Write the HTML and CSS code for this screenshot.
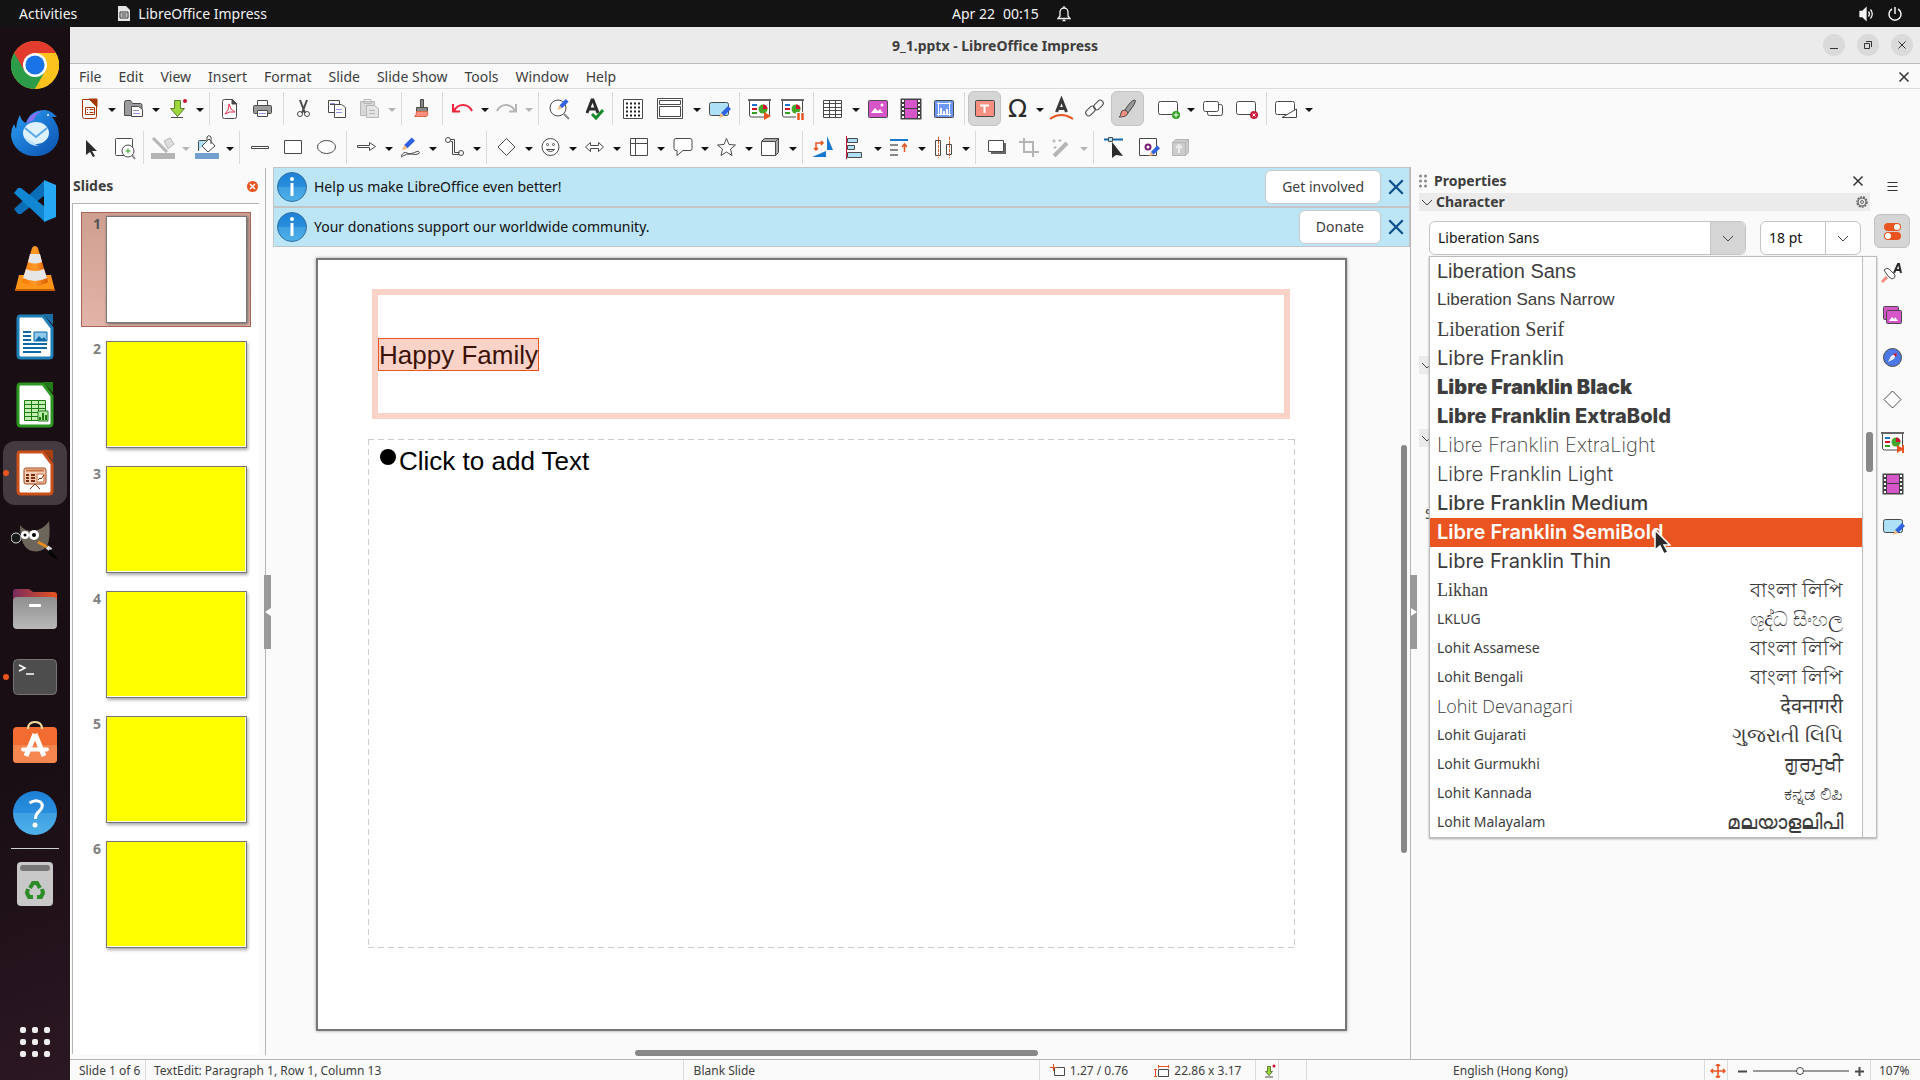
FILE: index.html
```html
<!DOCTYPE html>
<html lang="en">
<head>
<meta charset="utf-8">
<title>9_1.pptx - LibreOffice Impress</title>
<link rel="stylesheet" href="styles.css">
</head>
<body>
<svg class="defs" aria-hidden="true">
  <defs>
    <linearGradient id="g-info" x1="0" y1="0" x2="0" y2="1"><stop offset="0" stop-color="#1c7fd6"/><stop offset=".5" stop-color="#2a8fdd"/><stop offset=".5" stop-color="#3fa0e2"/><stop offset="1" stop-color="#4fb0ea"/></linearGradient>
    <linearGradient id="g-bird" x1="0" y1="0" x2="1" y2="1"><stop offset="0" stop-color="#2aa0f5"/><stop offset="1" stop-color="#0b4fae"/></linearGradient>
    <linearGradient id="g-cone" x1="0" y1="0" x2="1" y2="0"><stop offset="0" stop-color="#f57900"/><stop offset=".5" stop-color="#ff9a2a"/><stop offset="1" stop-color="#d85a00"/></linearGradient>
    <linearGradient id="g-fold" x1="0" y1="0" x2="1" y2="0"><stop offset="0" stop-color="#7a2a5c"/><stop offset="1" stop-color="#e95420"/></linearGradient>
    <linearGradient id="g-grey" x1="0" y1="0" x2="0" y2="1"><stop offset="0" stop-color="#8f8f8f"/><stop offset="1" stop-color="#b8b8b8"/></linearGradient>
    <symbol id="i-pencil" viewBox="0 0 12 12"><path d="M9 0 12 3 5 10 2 7Z" fill="#2f62e0" stroke="none"/><path d="M2 7 5 10 0 12Z" fill="#f7b877" stroke="none"/></symbol>
    <symbol id="i-film" viewBox="0 0 25 25"><rect x="3" y="3" width="20" height="20" fill="#3c3c3c"/><rect x="7" y="4" width="12" height="8" fill="#d655c9" stroke="none"/><rect x="7" y="13" width="12" height="9" fill="#d655c9" stroke="none"/><path d="M5 4v19M21 4v19" stroke="#fff" stroke-width="2" stroke-dasharray="2 2" fill="none"/></symbol>
    <symbol id="i-show" viewBox="0 0 25 25"><path d="M2.500 5v14q0 2 2 2h16q2 0 2-2V5" fill="#fff" stroke="#4a4a4a"/><rect x="1" y="3" width="23" height="2" fill="#666" stroke="none"/><path d="M5 9h5" stroke="#1a73d0" stroke-width="2"/><path d="M5 13h5" stroke="#d01030" stroke-width="2"/><path d="M5 17h5" stroke="#30a020" stroke-width="2"/><circle cx="16" cy="13" r="4.500" fill="#43a82a" stroke="none"/><path d="M16 13V8.500a4.500 4.500 0 0 1 4.500 4.500Z" fill="#d01030" stroke="none"/></symbol>
    <symbol id="i-info" viewBox="0 0 30 30"><circle cx="15" cy="15" r="14.500" fill="url(#g-info)" stroke="#33719c"/><circle cx="15" cy="7" r="2" fill="#fff"/><rect x="13.500" y="11" width="3" height="13" fill="#fff"/></symbol>
    <symbol id="i-x" viewBox="0 0 16 16"><path d="M2 2 14 14M14 2 2 14"/></symbol>
    <symbol id="i-down" viewBox="0 0 12 12"><path d="M1 4 6 9 11 4"/></symbol>
    <symbol id="i-pane" viewBox="0 0 25 25"><rect x="3.500" y="6.500" width="19" height="13" rx="2" fill="#aee0f7" stroke="#4a4a4a"/></symbol>
  </defs>
</svg>

<header class="topbar">
  <button class="top-btn activities">Activities</button>
  <button class="top-btn app-menu">
    <svg width="14" height="16" viewBox="0 0 14 16"><path d="M1 0h8l4 4v11H1z" fill="#e4e4e4"/><path d="M3 6h8v6H3z" fill="#e4e4e4" stroke="#333"/><path d="M4.500 8h5M4.500 10h5" stroke="#333"/></svg>
    LibreOffice Impress
  </button>
  <button class="top-btn clock"><span>Apr 22</span><span>00:15</span>
    <svg width="14" height="16" viewBox="0 0 14 16" fill="none" stroke="#f2f2f2" stroke-width="1.300"><path d="M1 12.500 3 10V6a4 4 0 0 1 8 0v4l2 2.500ZM5.500 14.500h3M7 0v2"/></svg>
  </button>
  <button class="top-btn tray" aria-label="System">
    <svg width="16" height="16" viewBox="0 0 16 16" fill="none" stroke="#f2f2f2" stroke-width="1.300"><path d="M1 5.500h2.500L7 2v12L3.500 10.500H1Z" fill="#f2f2f2"/><path d="M9.500 5.500q2 2.500 0 5M11.500 3.500q3.500 4.500 0 9"/></svg>
    <svg width="16" height="16" viewBox="0 0 16 16" fill="none" stroke="#f2f2f2" stroke-width="1.500"><path d="M5 3a6 6 0 1 0 6 0M8 1v7"/></svg>
  </button>
</header>

<div class="desktop">
<nav class="dock" aria-label="Dock">
  <button class="dock-item" aria-label="Chrome"><svg viewBox="0 0 48 48"><circle cx="24" cy="24" r="24" fill="#fbbc05"/><path d="M24 24 3.200 12A24 24 0 0 1 44.800 12Z" fill="#e33b2e"/><path d="M3.200 12A24 24 0 0 0 24 48L34.400 30 24 24Z" fill="#2c9c48"/><path d="M24 12H44.800A24 24 0 0 1 24 48L34.400 30Z" fill="#fcc31c"/><path d="M3.200 12 13.600 30 24 12Z" fill="#e33b2e"/><circle cx="24" cy="24" r="12" fill="#fff"/><circle cx="24" cy="24" r="9.600" fill="#1a73e8"/></svg></button>
  <button class="dock-item" aria-label="Thunderbird"><svg viewBox="0 0 48 48"><path d="M9 6q1 6 6 8Q19 1 34 1q7 1 12 7l-5 0q7 8 7 18A23 21 0 0 1 24 47 23 22 0 0 1 0 26q0-6 3-11l2 5Q6 11 9 6Z" fill="url(#g-bird)"/><path d="M15 14Q20 3 32 2q-8 3-9 9Z" fill="#8a6ff0"/><ellipse cx="25" cy="24" rx="13" ry="11" fill="#dff1fd"/><path d="M14 19 25 28 36 19" fill="none" stroke="#5aa9ea" stroke-width="2"/><path d="M13 28q4 9 15 9-5-2-6-4Z" fill="#bfe3fb"/><circle cx="37" cy="6" r="1" fill="#fff"/></svg></button>
  <button class="dock-item" aria-label="Visual Studio Code"><svg viewBox="0 0 48 48"><path d="M34 3 3 32l4 5 3 0L34 18Z" fill="#0a6fb8"/><path d="M34 45 3 16l4-5h3L34 30Z" fill="#1187d3"/><path d="M33 3 45 8v32L33 45Z" fill="#27a8f4"/></svg></button>
  <button class="dock-item" aria-label="VLC"><svg viewBox="0 0 48 48"><path d="M8 30h32l4 16H4Z" fill="#ff9518"/><path d="M4 44h40v2H4Z" fill="#c75f00"/><path d="M21 3q3-4 6 0l10 34q-13 8-26 0Z" fill="url(#g-cone)"/><path d="M19 9h10l2 8q-7 3-14 0ZM15 24q9 4 18 0l3 9q-12 6-24 0Z" fill="#e6e6e6"/></svg></button>
  <button class="dock-item" aria-label="Writer"><svg viewBox="0 0 48 48"><path d="M9 3h23l9 12v27q0 3-3 3H10q-3 0-3-3V6q0-3 2-3Z" fill="#fff" stroke="#1f7fb8" stroke-width="3"/><path d="M32 1h10v11Z" fill="#1b6fa6"/><path d="M12 19h8M12 23h8M12 27h8M12 31h24M12 35h24M12 39h18" stroke="#0d69a8" stroke-width="2"/><path d="M23 19h13v9H23z" fill="#8fc8ea" stroke="#0d69a8"/><path d="m24 28 4-5 3 3 2-2 3 4Z" fill="#0d69a8"/></svg></button>
  <button class="dock-item" aria-label="Calc"><svg viewBox="0 0 48 48"><path d="M9 3h23l9 12v27q0 3-3 3H10q-3 0-3-3V6q0-3 2-3Z" fill="#fff" stroke="#2c9620" stroke-width="3"/><path d="M32 1h10v11Z" fill="#227a18"/><path d="M13.500 19.500h21v20h-21zM13.500 23.500h21M13.500 27.500h21M13.500 31.500h21M13.500 35.500h21M20.500 19.500v20M27.500 19.500v20" stroke="#1f7a14" fill="#c3efb2"/><path d="M27 30h10v10H27z" fill="#b9eda6" stroke="#1f7a14"/><path d="M29 39v-3M32 39v-7M35 39v-5" stroke="#1f7a14" stroke-width="2"/></svg></button>
  <button class="dock-item active running" aria-label="Impress"><svg viewBox="0 0 48 48"><path d="M9 3h23l9 12v27q0 3-3 3H10q-3 0-3-3V6q0-3 2-3Z" fill="#fff" stroke="#c9501a" stroke-width="3"/><path d="M32 1h10v11Z" fill="#a8400f"/><rect x="13" y="19" width="22" height="16" rx="2" fill="#f6cfb8" stroke="#9c4013"/><path d="M15 21.500h18" stroke="#c96b3b" stroke-width="2"/><path d="M15 26h3M15 29h3M15 32h3M20 26h4M20 29h4M20 32h4" stroke="#7a2c08" stroke-width="2"/><path d="M26 25h7v8h-7z" fill="#fff" stroke="#c96b3b"/><path d="m27 31 2-2 1 1 3-4M24 35l-5 5M24 35l5 5" stroke="#7a2c08" fill="none"/></svg></button>
  <button class="dock-item" aria-label="GIMP"><svg viewBox="0 0 48 48"><path d="M9 8q5 7 15 6Q34 11 38 4q2 17-2 25-5 7-15 5Q9 31 9 8Z" fill="#6b6659"/><circle cx="5" cy="21" r="5" fill="#181818" stroke="#ddd"/><circle cx="14" cy="18" r="4" fill="#fff"/><circle cx="23" cy="18" r="5" fill="#fff"/><circle cx="14" cy="18" r="1.500"/><circle cx="23" cy="18" r="2"/><path d="m27 25 9 5" stroke="#e98a1e" stroke-width="3"/><path d="m36 30 4 3" stroke="#ddd" stroke-width="4"/><path d="m39 32 8 10q-8-1-10-7Z" fill="#050505"/></svg></button>
  <button class="dock-item" aria-label="Files"><svg viewBox="0 0 48 48"><path d="M2 12V7q0-3 3-3h13l4 3h21q3 0 3 3v10H2Z" fill="url(#g-fold)"/><rect x="2" y="12" width="44" height="32" rx="4" fill="url(#g-grey)"/><rect x="18" y="19" width="12" height="3" rx="1" fill="#fff"/></svg></button>
  <button class="dock-item running" aria-label="Terminal"><svg viewBox="0 0 48 48"><rect x="2.500" y="6.500" width="43" height="35" rx="4" fill="#4d4d4d" stroke="#757575"/><path d="m8 12 6 3-6 3M15 21h8" stroke="#fff" stroke-width="1.500" fill="none"/></svg></button>
  <button class="dock-item" aria-label="Software"><svg viewBox="0 0 48 48"><rect x="2" y="6" width="44" height="36" rx="4" fill="#f26b30"/><path d="M2 24h44v14q0 4-4 4H6q-4 0-4-4Z" fill="#f5864f"/><path d="M17 8q0-7 7-7t7 7" fill="none" stroke="#f7d9a0" stroke-width="2"/><path d="M24 13 15 35M24 13l9 22" stroke="#fff" stroke-width="5"/><path d="M12 28.500h24" stroke="#fff" stroke-width="4" stroke-linecap="round"/></svg></button>
  <button class="dock-item" aria-label="Help"><svg viewBox="0 0 48 48"><circle cx="24" cy="24" r="22" fill="url(#g-info)"/><path d="M18.500 14q6-4 11-1 4 4-1 9-4 3-4 8" fill="none" stroke="#fff" stroke-width="3"/><circle cx="24" cy="36" r="2.500" fill="#fff"/></svg></button>
  <hr class="dock-line">
  <button class="dock-item trash" aria-label="Trash"><svg viewBox="0 0 48 48"><rect x="6" y="1" width="36" height="44" rx="4" fill="#c8c8c8"/><rect x="9" y="4" width="30" height="6" rx="3" fill="#777"/><g fill="none" stroke="#2c8c28" stroke-width="4"><path d="m19 27 3-5h4l3 5"/><path d="m31 28 1 4-2 4h-4"/><path d="M22 36h-4l-2-4 1-4"/></g></svg></button>
  <button class="dock-item apps" aria-label="Show Applications"><svg viewBox="0 0 48 48" fill="#eee"><g id="dots"><rect x="9" y="9" width="6" height="6" rx="2"/><rect x="21" y="9" width="6" height="6" rx="2"/><rect x="33" y="9" width="6" height="6" rx="2"/></g><use href="#dots" y="12"/><use href="#dots" y="24"/></svg></button>
</nav>

<div class="window">
  <div class="titlebar">
    <h1>9_1.pptx - LibreOffice Impress</h1>
    <div class="win-btns">
      <button class="win-btn" aria-label="Minimize"><svg viewBox="0 0 22 22"><path d="M7 14.500h8"/></svg></button>
      <button class="win-btn" aria-label="Restore"><svg viewBox="0 0 22 22"><path d="M7.500 9.500h5v5h-5zM9 7.500h5.500V13"/></svg></button>
      <button class="win-btn" aria-label="Close"><svg viewBox="0 0 22 22"><path d="m7.500 7.500 7 7M14.500 7.500l-7 7"/></svg></button>
    </div>
  </div>
  <nav class="menubar">
    <button>File</button><button>Edit</button><button>View</button><button>Insert</button><button>Format</button><button>Slide</button><button>Slide Show</button><button>Tools</button><button>Window</button><button>Help</button>
    <button class="doc-close" aria-label="Close document"><svg class="x"><use href="#i-x"/></svg></button>
  </nav>

  <div class="toolbar">
    <button class="tb" aria-label="New"><svg><path d="M5.500 3.500h8l6 6v11q0 2-2 2h-10q-2 0-2-2Z" stroke="#a63a00" fill="#fff"/><path d="M12 3h8v8Z" fill="#a63a00" stroke="#a63a00"/><path d="M8.500 11.500h9v7h-9zM10 13.500h1M12.500 13.500h4M10 16.500h1M12.500 16.500h4" stroke="#a63a00"/></svg></button><button class="dd" aria-label="New options"></button>
    <button class="tb" aria-label="Open"><svg><path d="M3.500 6.500q0-2 2-2h4l2 3h8q1.500 0 1.500 2v10h-17.500Z" fill="#9c9c9c"/><path d="M10.500 10.500h7l4 3v7h-11z" fill="#fff"/><path d="M12 14.500h6M12 17.500h7" stroke="#8f8ff0"/></svg></button><button class="dd" aria-label="Open options"></button>
    <button class="tb" aria-label="Save"><svg><path d="M9.500 4.500h6v8h4l-7 8-7-8h4Z" fill="#9bd63a" stroke="#5d7a30"/><path d="M6 21.500h12" stroke="#4a4a4a"/><circle cx="20" cy="5" r="2" fill="#d01030" stroke="none"/></svg></button><button class="dd" aria-label="Save options"></button>
    <i class="sep"></i>
    <button class="tb" aria-label="Export as PDF"><svg><path d="M5.500 5.500q0-2 2-2h8l4 4v13q0 2-2 2h-10q-2 0-2-2Z" fill="#fff"/><path d="M15 3v5h5Z" fill="#4a4a4a"/><path d="M12 8q1 6 6 8-6-1-10 2 4-3 4-10" stroke="#e0304a"/></svg></button>
    <button class="tb" aria-label="Print"><svg><path d="M7.500 4.500h10v6h-10z" fill="#fff"/><rect x="3.500" y="9.500" width="18" height="8" rx="1" fill="#9c9c9c"/><path d="M7.500 14.500h10v6h-10z" fill="#fff"/><path d="M9 17.500h7" stroke="#8f8ff0"/></svg></button>
    <i class="sep"></i>
    <button class="tb" aria-label="Cut"><svg><path d="m9 4 5 13M16 4l-5 13" stroke-width="2"/><circle cx="9" cy="18" r="2.500"/><circle cx="16" cy="18" r="2.500"/></svg></button>
    <button class="tb" aria-label="Copy"><svg><path d="M4.500 4.500h11v12h-11zM6 8.500h6" fill="#fff"/><path d="M10.500 8.500h7l4 3v10h-11z" fill="#fff"/><path d="M12 13.500h6M12 16.500h6M6 7.500h5" stroke="#8f8ff0"/></svg></button>
    <button class="tb off" aria-label="Paste"><svg><path d="M3.500 5.500h14v14h-14z" fill="#d8d8d8"/><path d="M7 3.500h7v4H7z"/><path d="M9.500 9.500h8l4 3v9h-12z" fill="#e4e4e4"/><path d="M12 14.500h6M12 17.500h6"/></svg></button><button class="dd off" aria-label="Paste options"></button>
    <i class="sep"></i>
    <button class="tb" aria-label="Clone Formatting"><svg><path d="M11.500 3.500h3v8h-3z" fill="#888"/><path d="M7.500 11.500h11v4h-11z" fill="#888"/><path d="M7.500 15.500h11q1 4-1 5h-12q2-1 2-5Z" fill="#f98f80" stroke="#d64"/></svg></button>
    <i class="sep"></i>
    <button class="tb" aria-label="Undo"><svg stroke-width="2" class="red"><path d="M3 8v7.500h7M4 15q3-6 9-6t9 6"/></svg></button><button class="dd" aria-label="Undo options"></button>
    <button class="tb off" aria-label="Redo"><svg stroke-width="2"><path d="M22 8v7.500h-7M21 15q-3-6-9-6t-9 6"/></svg></button><button class="dd off" aria-label="Redo options"></button>
    <i class="sep"></i>
    <button class="tb" aria-label="Find and Replace"><svg><circle cx="12" cy="12" r="8" fill="#fff"/><path d="m18 18 5 5" stroke="#888" stroke-width="2"/><use href="#i-pencil" x="11" y="3" width="12" height="11"/></svg></button>
    <button class="tb" aria-label="Spelling"><svg><path d="M8 17 13 4h1l5 13M10 13h7" stroke="#2b2b2b" stroke-width="3"/><path d="m13 18 4 4 7-8" stroke="#168a2a" stroke-width="3"/></svg></button>
    <i class="sep"></i>
    <button class="tb" aria-label="Display Grid"><svg><path d="M3.500 3.500h19v19h-19z" fill="#fff"/><path d="M6 7.500h15M6 11.500h15M6 15.500h15M6 19.500h15" stroke="#222" stroke-width="2" stroke-dasharray="2 2"/></svg></button>
    <button class="tb wide" aria-label="Display Views"><svg viewBox="0 0 29 25"><path d="M1.500 2.500h25v20h-25zM3.500 4.500h21v4h-21zM3.500 10.500h21v10h-21z" fill="#fff"/></svg></button><button class="dd" aria-label="Display Views options"></button>
    <button class="tb" aria-label="Master Slide"><svg><use href="#i-pane"/><use href="#i-pencil" x="13" y="8" width="12" height="16"/></svg></button>
    <i class="sep"></i>
    <button class="tb" aria-label="Start from First Slide"><svg><use href="#i-show"/><path d="m17 16 7 4-7 4Z" fill="#e95420" stroke="none"/></svg></button>
    <button class="tb" aria-label="Start from Current Slide"><svg><use href="#i-show"/><path d="M16 16h8v8h-8z" fill="#fff" stroke="none"/><path d="M18.500 17v7M22.500 17v7" stroke="#e95420" stroke-width="2.500"/></svg></button>
    <i class="sep"></i>
    <button class="tb" aria-label="Table"><svg><path d="M2.500 4.500h18v17h-18zM2.500 7.500h18M2.500 11.500h18M2.500 14.500h18M2.500 18.500h18M8.500 4.500v17M14.500 4.500v17" fill="#fff"/></svg></button><button class="dd" aria-label="Table options"></button>
    <button class="tb" aria-label="Insert Image"><svg><rect x="3.500" y="4.500" width="19" height="17" rx="1" fill="#d655c9"/><path d="m6 17 4-5 3 3 2-2 3 4Z" fill="#fff" stroke="none"/><circle cx="17" cy="9" r="1.500" fill="#fff" stroke="none"/></svg></button>
    <button class="tb" aria-label="Insert Audio or Video"><svg><use href="#i-film"/></svg></button>
    <button class="tb" aria-label="Insert Chart"><svg><rect x="3.500" y="4.500" width="19" height="17" rx="1" fill="#6f97f5"/><path d="M6 7.500h14M6 18.500h14M7.500 6v14M18.500 6v14" stroke="#fff"/><path d="M10 18v-6M13 18v-3M16 18v-5" stroke="#fff" stroke-width="2"/></svg></button>
    <i class="sep"></i>
    <button class="tb on" aria-label="Insert Text Box"><svg><rect x="3.500" y="4.500" width="19" height="16" rx="1" fill="#f98f80"/><path d="M8 9.500h9M12.500 9v8" stroke="#fff" stroke-width="2"/></svg></button>
    <button class="tb glyph" aria-label="Special Character">Ω</button><button class="dd" aria-label="Special Character options"></button>
    <button class="tb" aria-label="Fontwork"><svg><path d="M7.500 16 12.500 3.500 17.500 16M9 12.500h7" stroke="#3a3a3a" stroke-width="3"/><path d="M1 23q11-8 23 0" stroke="#e95420" stroke-width="2"/></svg></button>
    <button class="tb" aria-label="Hyperlink"><svg><rect x="3" y="12" width="11" height="6" rx="3" transform="rotate(-45 8.500 15)"/><rect x="11" y="6" width="11" height="6" rx="3" transform="rotate(-45 16.500 9)"/></svg></button>
    <button class="tb on" aria-label="Show Draw Functions"><svg><path d="M10 14Q16 4 20 4q2 2-7 13Z" fill="#999"/><path d="M10 14q2 1 3 3-1 4-9 4 2-1 2-4t4-3Z" fill="#f98f80"/></svg></button>
    <i class="gap"></i>
    <button class="tb" aria-label="New Slide"><svg><rect x="2.500" y="5.500" width="19" height="13" rx="2" fill="#fff"/><circle cx="20" cy="19" r="4" fill="#30a020" stroke="none"/><path d="M17.500 19h5M20 16.500v5" stroke="#fff"/></svg></button><button class="dd" aria-label="New Slide options"></button>
    <button class="tb" aria-label="Duplicate Slide"><svg><rect x="7.500" y="8.500" width="15" height="11" rx="2" fill="#fff"/><rect x="3.500" y="5.500" width="15" height="10" rx="2" fill="#fff"/></svg></button>
    <button class="tb" aria-label="Delete Slide"><svg><rect x="3.500" y="5.500" width="19" height="13" rx="2" fill="#fff"/><circle cx="21" cy="19" r="4" fill="#c8203c" stroke="none"/><path d="m19.500 17.500 3 3M22.500 17.500l-3 3" stroke="#fff"/></svg></button>
    <i class="sep"></i>
    <button class="tb" aria-label="Slide Layout"><svg><rect x="1.500" y="5.500" width="19" height="13" rx="2" fill="#fff"/><path d="M8 21.500 22.500 13v8.500Z" fill="#fff"/></svg></button><button class="dd" aria-label="Slide Layout options"></button>
  </div>

  <div class="toolbar">
    <button class="tb" aria-label="Select"><svg><path d="M9 5v15l4-3 3 5 2-1-3-5h5Z" fill="#2b2b2b" stroke="none"/></svg></button>
    <button class="tb" aria-label="Zoom and Pan"><svg><rect x="5.500" y="3.500" width="17" height="17" rx="1" fill="#fff"/><circle cx="18" cy="16" r="6" fill="#fff"/><path d="m22 20 3 4" stroke="#888" stroke-width="2"/><path d="M15.500 16h5M18 13.500v5" stroke="#30a020"/></svg></button>
    <i class="sep"></i>
    <button class="tb off" aria-label="Line Color"><svg><path d="m2 3 14 14" stroke-width="3"/><path d="m13 6 6-3 4 6-6 5Z" fill="#ddd"/><rect x="0" y="18" width="24" height="6" fill="#b5b5b5" stroke="none"/></svg></button><button class="dd off" aria-label="Line Color options"></button>
    <button class="tb" aria-label="Fill Color"><svg><path d="M3.500 16V6.500q0-1 1-1H11" fill="#aee0f7"/><path d="m14 4 6 7-7 6-6-6Z" fill="#fff"/><path d="M12 6V2q2-3 4 0v7"/><rect x="0" y="18" width="24" height="6" fill="#729fcf" stroke="none"/></svg></button><button class="dd" aria-label="Fill Color options"></button>
    <i class="sep"></i>
    <button class="tb" aria-label="Insert Line"><svg><path d="M4.500 11.500h17v2h-17z" fill="#fff"/></svg></button>
    <button class="tb" aria-label="Rectangle"><svg><path d="M4.500 5.500h17v13h-17z" fill="#fff"/></svg></button>
    <button class="tb" aria-label="Ellipse"><svg><ellipse cx="13.500" cy="12" rx="9" ry="6.500" fill="#fff"/></svg></button>
    <i class="sep"></i>
    <button class="tb" aria-label="Lines and Arrows"><svg><path d="M3.500 10.500h12v-3l6 4-6 4v-3h-12z" fill="#fff"/></svg></button><button class="dd" aria-label="Lines options"></button>
    <button class="tb" aria-label="Curves and Polygons"><svg><path d="M3 21q3-5 6-3t11-2q3 2 0 3t-7 0-10 3" /><use href="#i-pencil" x="4" y="2" width="13" height="14"/></svg></button><button class="dd" aria-label="Curves options"></button>
    <button class="tb" aria-label="Connectors"><svg><circle cx="6" cy="5" r="2.500"/><path d="M8.500 4.500h4v13h5M8.500 6.500h2v13h7"/><circle cx="19" cy="18" r="2.500"/></svg></button><button class="dd" aria-label="Connectors options"></button>
    <i class="sep"></i>
    <button class="tb" aria-label="Basic Shapes"><svg><path d="m12.500 3.500 8.500 8.500-8.500 8.500L4 12Z" fill="#fff"/></svg></button><button class="dd" aria-label="Basic Shapes options"></button>
    <button class="tb" aria-label="Symbol Shapes"><svg><circle cx="12.500" cy="12" r="8.500" fill="#fff"/><circle cx="9.500" cy="9.500" r="1"/><circle cx="15.500" cy="9.500" r="1"/><path d="M8.500 14.500q4 4 8 0Z"/></svg></button><button class="dd" aria-label="Symbol Shapes options"></button>
    <button class="tb" aria-label="Block Arrows"><svg><path d="m3.500 12 5-4.500v3h8v-3l5 4.500-5 4.500v-3h-8v3Z" fill="#fff"/></svg></button><button class="dd" aria-label="Block Arrows options"></button>
    <button class="tb" aria-label="Flowchart"><svg><path d="M4.500 3.500h17v17h-17zM9.500 3.500v17M4.500 8.500h17" fill="#fff"/></svg></button><button class="dd" aria-label="Flowchart options"></button>
    <button class="tb" aria-label="Callouts"><svg><path d="M6 3.500h14q2 0 2 2v8q0 2-2 2h-7l-6 5v-5H6q-2 0-2-2v-8q0-2 2-2Z" fill="#fff"/></svg></button><button class="dd" aria-label="Callouts options"></button>
    <button class="tb" aria-label="Stars and Banners"><svg><path d="m12.500 3.500 2.500 6 6.500.500-5 4 1.500 6.500-5.500-3.500L7 20.500l1.500-6.500-5-4L10 9.500Z" fill="#fff"/></svg></button><button class="dd" aria-label="Stars options"></button>
    <button class="tb" aria-label="3D Objects"><svg><path d="m3.500 6.500 3-3h14v14l-3 3Z" fill="#aaa"/><path d="M3.500 6.500h14v14h-14zM17.500 6.500l3-3" fill="#fff"/></svg></button><button class="dd" aria-label="3D Objects options"></button>
    <i class="sep"></i>
    <button class="tb" aria-label="Rotate"><svg stroke="none"><path d="M17 1v14h6Z" fill="#1878cf" stroke="none"/><path d="M2 22h14v-6Z" fill="#1878cf" stroke="none"/><path d="M6 15V8h7M4 13l2 2 2-2M11 6l2 2-2 2" stroke="#e95420" stroke-width="1.500"/></svg></button>
    <button class="tb" aria-label="Align Objects"><svg><path d="M4.500 3.500h10v4h-10zM4.500 10.500h7v4h-7zM4.500 17.500h14v5h-14z" fill="#aee0f7"/><path d="M3.500 1v23" stroke="#d01030"/></svg></button><button class="dd" aria-label="Align options"></button>
    <button class="tb" aria-label="Arrange"><svg stroke-width="2"><path d="M3 5h18" stroke="#1878cf"/><path d="M3 10h8M3 15h8M3 20h8" stroke="#888"/><path d="M17.500 17V10M15 12l2.500-3 2.500 3" stroke="#e95420" stroke-width="1.500"/></svg></button><button class="dd" aria-label="Arrange options"></button>
    <button class="tb" aria-label="Distribute"><svg><path d="M4.500 5.500h5v15h-5zM15.500 9.500h5v10h-5z" fill="#fff"/><path d="M7.500 2v21M18.500 2v21" stroke="#e95420" stroke-dasharray="3 1"/></svg></button><button class="dd" aria-label="Distribute options"></button>
    <i class="sep"></i>
    <button class="tb" aria-label="Shadow"><svg><path d="M8 8h15v11H8z" fill="#666" stroke="none"/><path d="M5.500 5.500h15v11h-15z" fill="#fff"/></svg></button>
    <button class="tb off" aria-label="Crop Image"><svg stroke-width="2"><path d="M8 3v14h15M3 7h14v15"/></svg></button>
    <button class="tb off" aria-label="Filter"><svg><path d="m5 21 13-13" stroke-width="4"/><path d="M5 4v4M3 6h4M11 4v3M9.500 5.500h3M6 11v3M4.500 12.500h3"/></svg></button><button class="dd off" aria-label="Filter options"></button>
    <i class="sep"></i>
    <button class="tb" aria-label="Edit Points"><svg><path d="M3 4.500h19" stroke="#1766a6" stroke-width="2"/><path d="M11 7v16l4-3 7 1Z" fill="#2b2b2b" stroke="none"/><path d="M7.500 2.500h4v4h-4z" fill="#aee0f7"/></svg></button>
    <button class="tb" aria-label="Glue Points"><svg><path d="M5.500 3.500h17v17h-17z" fill="#fff"/><circle cx="14" cy="12" r="2.500" stroke="#7a1f78" stroke-width="2"/><use href="#i-pencil" x="15" y="9" width="11" height="14"/></svg></button>
    <button class="tb off" aria-label="Toggle Extrusion"><svg><path d="m5.500 7.500 3-3h13v13l-3 3h-13zM5.500 7.500h13v13M18.500 7.500l3-3" fill="#ccc"/><path d="M12 18v-7M9 13l3-3 3 3" stroke="#eee" stroke-width="2"/></svg></button>
  </div>

  <div class="body">
    <aside class="slides">
      <header class="slides-head"><h2>Slides</h2><button class="round-x" aria-label="Close pane"><svg viewBox="0 0 11 11"><path d="m3 3 5 5M8 3 3 8" stroke="#fff" stroke-width="1.500"/></svg></button></header>
      <ol class="slide-list">
        <li class="current"><span>1</span><button class="thumb blank" aria-label="Slide 1"></button></li>
        <li><span>2</span><button class="thumb" aria-label="Slide 2"></button></li>
        <li><span>3</span><button class="thumb" aria-label="Slide 3"></button></li>
        <li><span>4</span><button class="thumb" aria-label="Slide 4"></button></li>
        <li><span>5</span><button class="thumb" aria-label="Slide 5"></button></li>
        <li><span>6</span><button class="thumb" aria-label="Slide 6"></button></li>
      </ol>
    </aside>
    <div class="splitter"><button class="handle left" aria-label="Hide slides"></button></div>

    <main class="editor">
      <div class="infobar"><svg class="info"><use href="#i-info"/></svg><p>Help us make LibreOffice even better!</p><button class="action">Get involved</button><button class="bar-x" aria-label="Dismiss"><svg><use href="#i-x"/></svg></button></div>
      <div class="infobar"><svg class="info"><use href="#i-info"/></svg><p>Your donations support our worldwide community.</p><button class="action">Donate</button><button class="bar-x" aria-label="Dismiss"><svg><use href="#i-x"/></svg></button></div>
      <div class="canvas">
        <section class="page">
          <div class="title-box"><span class="marked">Happy Family</span></div>
          <div class="text-box"><i class="bullet"></i><span>Click to add Text</span></div>
        </section>
        <div class="vscroll"><i></i></div>
      </div>
      <div class="hscroll"><i></i></div>
    </main>
    <div class="splitter end"><button class="handle right" aria-label="Hide sidebar"></button></div>

    <aside class="props">
      <header class="props-head"><svg class="grip" viewBox="0 0 8 14" fill="#888"><circle cx="1.500" cy="2" r="1.500"/><circle cx="6.500" cy="2" r="1.500"/><circle cx="1.500" cy="7" r="1.500"/><circle cx="6.500" cy="7" r="1.500"/><circle cx="1.500" cy="12" r="1.500"/><circle cx="6.500" cy="12" r="1.500"/></svg><h2>Properties</h2><button aria-label="Close sidebar"><svg class="x"><use href="#i-x"/></svg></button></header>
      <div class="band"><svg class="chev"><use href="#i-down"/></svg><h3>Character</h3><button aria-label="More options"><svg class="gear" viewBox="0 0 12 12"><circle cx="6" cy="6" r="5" stroke-width="1.500" stroke-dasharray="2 1"/><circle cx="6" cy="6" r="4"/><circle cx="6" cy="6" r="1.500"/></svg></button></div>
      <div class="fields">
        <div class="combo name-combo"><input aria-label="Font Name" value="Liberation Sans"><button class="open" aria-label="Show fonts"><svg class="chev"><use href="#i-down"/></svg></button>
          <div class="popup">
            <ul class="fonts" role="listbox" aria-label="Fonts">
              <li class="f-sans">Liberation Sans</li>
              <li class="f-narrow">Liberation Sans Narrow</li>
              <li class="f-serif">Liberation Serif</li>
              <li class="f-libre">Libre Franklin</li>
              <li class="f-libre w900">Libre Franklin Black</li>
              <li class="f-libre w800">Libre Franklin ExtraBold</li>
              <li class="f-libre w200">Libre Franklin ExtraLight</li>
              <li class="f-libre w300">Libre Franklin Light</li>
              <li class="f-libre w500">Libre Franklin Medium</li>
              <li class="f-libre w600 picked" aria-selected="true">Libre Franklin SemiBold</li>
              <li class="f-libre">Libre Franklin Thin</li>
              <li class="f-likhan">Likhan<span lang="bn">বাংলা লিপি</span></li>
              <li>LKLUG<span lang="si">ශුද්ධ සිංහල</span></li>
              <li>Lohit Assamese<span lang="as">বাংলা লিপি</span></li>
              <li>Lohit Bengali<span lang="bn">বাংলা লিপি</span></li>
              <li class="f-deva">Lohit Devanagari<span lang="hi">देवनागरी</span></li>
              <li>Lohit Gujarati<span lang="gu">ગુજરાતી લિપિ</span></li>
              <li>Lohit Gurmukhi<span lang="pa">ਗੁਰਮੁਖੀ</span></li>
              <li>Lohit Kannada<span class="small" lang="kn">ಕನ್ನಡ ಲಿಪಿ</span></li>
              <li>Lohit Malayalam<span lang="ml">മലയാളലിപി</span></li>
            </ul>
            <div class="pop-scroll"><i></i></div>
            <svg class="pointer" viewBox="0 0 18 26"><path d="M2 1v20l5-4 4 8 4-2-4-7h6Z" fill="#2b2b2b" stroke="#fff" stroke-width="1.500"/></svg>
          </div>
        </div>
        <div class="combo size-combo"><input aria-label="Font Size" value="18 pt"><button aria-label="Show sizes"><svg class="chev"><use href="#i-down"/></svg></button></div>
      </div>
      <div class="band second"><svg class="chev"><use href="#i-down"/></svg></div>
      <div class="band third"><svg class="chev"><use href="#i-down"/></svg></div>
      <p class="spacing">S</p>
    </aside>
    <nav class="tabs" aria-label="Sidebar">
      <button class="menu" aria-label="Sidebar Settings"><svg><path d="M7.500 8.500h10M7.500 12.500h10M7.500 16.500h10" stroke="#333"/></svg></button>
      <button class="on" aria-label="Properties"><svg stroke="none"><rect x="4" y="4" width="17" height="8" rx="4" fill="#e95420" stroke="none"/><rect x="4" y="13" width="17" height="8" rx="4" fill="#e95420" stroke="none"/><circle cx="17" cy="8" r="3" fill="#fff" stroke="none"/><circle cx="8" cy="17" r="3" fill="#fff" stroke="none"/></svg></button>
      <button aria-label="Styles"><svg><path d="M14 12 18 3h1L21 12M15 9h5" stroke="#2b2b2b" stroke-width="2"/><path d="M4 9q3-3 5-1l6 6q1 3-3 4Q8 16 6 12Z" fill="#fff"/><path d="m2 21 5-5" stroke="#f98f80" stroke-width="3"/></svg></button>
      <button aria-label="Gallery"><svg><rect x="3.500" y="3.500" width="15" height="13" rx="1" fill="#d655c9"/><rect x="6.500" y="7.500" width="15" height="13" rx="1" fill="#d655c9"/><path d="m9 18 3-4 2 2 1-2 3 4Z" fill="#fff" stroke="none"/></svg></button>
      <button aria-label="Navigator"><svg><circle cx="12.500" cy="12.500" r="9" fill="#4c78e8"/><path d="m8 17 3-6 6-3-3 6Z" fill="#e8eefc" stroke="none"/><path d="m13 9 4-1-1 4Z" fill="#d01030" stroke="none"/></svg></button>
      <button aria-label="Shapes"><svg><path d="m12.500 4 8.500 8.500-8.500 8.500L4 12.500Z" fill="#fff"/></svg></button>
      <button aria-label="Slide Transition"><svg><use href="#i-show"/><path d="m17 16 5 3v-3h2v8h-2v-3l-5 3Z" fill="#e95420" stroke="none"/></svg></button>
      <button aria-label="Animation"><svg><use href="#i-film"/></svg></button>
      <button aria-label="Master Slides"><svg><use href="#i-pane"/><use href="#i-pencil" x="13" y="8" width="12" height="16"/></svg></button>
    </nav>
  </div>

  <footer class="status">
    <span class="c-slide">Slide 1 of 6</span>
    <span class="c-edit">TextEdit: Paragraph 1, Row 1, Column 13</span>
    <span class="c-layout">Blank Slide</span>
    <span class="c-pos"><svg viewBox="0 0 16 14"><path d="M4.500 3.500h10v8h-10z"/><path d="M0 3.500h7M3.500 0v7" stroke="#e95420"/></svg><b>1.27 / 0.76</b><svg viewBox="0 0 16 14"><path d="M4.500 5.500h10v7h-10z"/><path d="M4 2.500h11M4.500 1v3M14.500 1v3M1.500 5v8M0 5.500h3M0 12.500h3" stroke="#e95420"/></svg><b>22.86 x 3.17</b></span>
    <span class="c-save"><svg viewBox="0 0 16 14"><path d="M6.500 2.500h3v5h2l-3.500 4-3.500-4h2Z" fill="#9bd63a" stroke="#5d7a30"/><path d="M4 13h8"/><circle cx="13" cy="2" r="1.500" fill="#d01030" stroke="none"/></svg></span>
    <span class="c-sign"></span>
    <span class="c-lang">English (Hong Kong)</span>
    <span class="c-fit"><svg viewBox="0 0 16 14" class="fit"><path d="M8 0v14M1 7h14M6 2l2-2 2 2M6 12l2 2 2-2M3 5 1 7l2 2M13 5l2 2-2 2"/></svg></span>
    <span class="c-zoom"><button aria-label="Zoom out"><svg viewBox="0 0 9 9"><path d="M0 4.500h9"/></svg></button><input type="range" aria-label="Zoom" min="0" max="100" value="49"><button aria-label="Zoom in"><svg viewBox="0 0 9 9"><path d="M0 4.500h9M4.500 0v9"/></svg></button></span>
    <span class="c-pct">107%</span>
  </footer>
</div>
</div>
</body>
</html>
```
FILE: styles.css
```css
* { box-sizing: border-box; }
html, body { height: 100%; }
body {
  margin: 0;
  display: flex;
  flex-direction: column;
  font: 14px/20px "Noto Sans", "Open Sans", sans-serif;
  color: #3d3d3d;
  background: #fafafa;
  overflow: hidden;
}
h1, h2, h3, p, ol, ul { margin: 0; padding: 0; list-style: none; }
h1, h2, h3 { font-size: 14px; line-height: 20px; font-weight: 700; }
button {
  border: 0; padding: 0; background: none; color: inherit; font: inherit;
  display: flex; align-items: center; justify-content: center; flex: none;
}
input { font: inherit; color: #111; min-width: 0; }
svg { display: block; flex: none; }
.defs { width: 0; height: 0; position: absolute; }

/* system bar */
.topbar {
  height: 27px; flex: none;
  display: grid; grid-template-columns: auto auto 1fr auto; align-items: center;
  background: #131313; color: #f2f2f2; position: relative;
}
.activities { padding-left: 19px; }
.app-menu { padding-left: 40px; gap: 7px; }
.clock { gap: 8px; position: absolute; left: 50%; margin-left: -8px; }
.clock svg { margin-left: 10px; }
.tray { grid-column: 4; gap: 12px; padding-right: 17px; }

.desktop { flex: 1; display: flex; min-height: 0; }

/* dock */
.dock {
  width: 70px; flex: none; padding: 6px 3px 6px;
  display: flex; flex-direction: column; gap: 4px;
  background: linear-gradient(160deg, #190e14 70%, #2b1722);
}
.dock-item { height: 64px; border-radius: 12px; position: relative; }
.dock-item svg { width: 48px; height: 48px; }
.dock-item.active { background: #453a40; }
.dock-item.running::before {
  content: ""; position: absolute; left: 0; top: 29px;
  width: 6px; height: 6px; border-radius: 3px; background: #e95420;
}
.dock-line { width: 48px; margin: -1px auto 0; border: 0; border-top: 1px solid #d0d0d0; }
.apps { margin-top: auto; }

/* window frame */
.window { flex: 1; min-width: 0; display: flex; flex-direction: column; }
.titlebar {
  height: 37px; flex: none; display: grid; grid-template-columns: 1fr auto 1fr; align-items: center;
  background: #ebebeb; border-bottom: 1px solid #bcbcbc;
}
.titlebar h1 { grid-column: 2; padding-top: 2px; }
.win-btns { display: flex; justify-content: flex-end; gap: 12px; padding-right: 7px; }
.win-btn { width: 22px; height: 22px; border-radius: 11px; background: #dadada; }
.win-btn svg { width: 22px; height: 22px; fill: none; stroke: #333; }
.menubar {
  height: 25px; flex: none; display: flex; gap: 17px; padding: 1px 10px 0 9px;
  border-bottom: 1px solid #dcdcdc;
}
.doc-close { margin-left: auto; }
.x { width: 12px; height: 12px; fill: none; stroke: #333; stroke-width: 2; }

/* toolbars */
.toolbar { height: 39px; flex: none; display: flex; align-items: flex-start; padding: 2px 3px; }
.tb { width: 33px; height: 35px; border-radius: 6px; border: 1px solid transparent; }
.tb svg, .tabs svg { width: 25px; height: 25px; fill: none; stroke: #4a4a4a; overflow: visible; }
.tb.wide { width: 42px; }
.tb.wide svg { width: 29px; }
.tb.on { background: #d5d5d5; border-color: #c3c3c3; }
.tb.off svg { stroke: #b5b5b5; }
.tb .red { stroke: #f0243c; }
.glyph { font: 400 25px/30px "DejaVu Sans", sans-serif; color: #2b2b2b; }
.dd { width: 11px; height: 35px; }
.dd::before {
  content: ""; border: 4px solid transparent; border-top-color: #111; border-bottom: 0; margin-top: 2px;
}
.dd.off::before { border-top-color: #b5b5b5; }
.sep { width: 8px; height: 33px; flex: none; display: flex; justify-content: center; margin-top: 1px; }
.sep::before { content: ""; width: 1px; background: #dadada; }
.gap { width: 8px; flex: none; }

.body { flex: 1; display: flex; min-height: 0; }

/* slide pane */
.slides { width: 189px; flex: none; display: flex; flex-direction: column; padding-left: 2px; }
.slides-head { height: 36px; display: flex; align-items: center; padding: 3px 1px 1px; }
.round-x { width: 11px; height: 11px; border-radius: 6px; background: #e95420; margin-left: auto; }
.round-x svg { width: 11px; height: 11px; }
.slide-list {
  flex: 1; background: #fff; margin-bottom: 5px;
  border: 1px solid #b5b5b5; border-width: 1px 0 0 1px;
  padding: 8px; display: flex; flex-direction: column; gap: 10px;
}
.slide-list li {
  height: 115px; flex: none; display: flex; align-items: flex-start; justify-content: space-between;
  padding: 3px 3px 3px 11px; border: 1px solid transparent;
  font-weight: 700; line-height: 16px; color: #808080;
}
.slide-list .current { border-color: #a86656; background: linear-gradient(#cfa092, #e2b3a6); color: #555; }
.thumb {
  width: 141px; height: 107px; border: 1px solid #777; background: #ff0;
  box-shadow: inset -1px -1px #fff, 1px 2px 3px #aaa;
}
.thumb.blank { background: #fff; }
.slide-list .current .thumb { box-shadow: 1px 1px 3px #666; }

/* splitters */
.splitter { width: 13px; flex: none; display: flex; align-items: center; padding: 0 0 2px 5px; position: relative; }
.splitter::before { content: ""; position: absolute; left: 6px; top: 1px; bottom: 4px; border-left: 1px solid #b5b5b5; }
.handle { width: 7px; height: 74px; background: #999; position: relative; }
.handle::before { content: ""; border: 4px solid transparent; }
.left::before { border-right: 6px solid #fff; border-left: 0; }
.right::before { border-left: 6px solid #fff; border-right: 0; }
.splitter.end { width: 7px; padding-left: 0; }
.splitter.end::before { left: 0; top: 0; bottom: 0; }

/* editing area */
.editor { flex: 1; min-width: 0; display: flex; flex-direction: column; padding-left: 1px; }
.infobar {
  height: 40px; flex: none; display: flex; align-items: center; color: #111;
  background: #bce5f6; border: 1px solid #c4c4c4; padding: 0 5px 0 3px;
}
.info { width: 30px; height: 30px; }
.infobar p { flex: 1; padding-left: 7px; }
.action {
  height: 34px; padding: 0 16px; background: #fff; border: 1px solid #c8c8c8; border-radius: 6px; color: #3d3d3d;
}
.bar-x { width: 16px; margin-left: 7px; }
.bar-x svg { width: 18px; height: 18px; fill: none; stroke: #0d4f8b; stroke-width: 2; }
.canvas { flex: 1; display: flex; min-height: 0; padding: 11px 3px 0 43px; }
.page {
  flex: 1; background: #fff; border: 2px solid #777; box-shadow: 0 0 3px #999;
  margin: 0 54px 19px 0; padding: 29px 50px 81px; display: flex; flex-direction: column;
  font: 26px/30px "Liberation Sans", Arial, sans-serif; color: #000;
}
.title-box { height: 130px; flex: none; margin: 0 5px 20px 4px; border: 6px solid #f9d3c7; display: flex; align-items: center; }
.marked { background: #f9d3c7; border: 1px solid #e95420; color: #3c1208; line-height: 29px; padding-top: 2px; }
.text-box {
  --dash: #ccc 0 6px, transparent 6px 10px;
  flex: 1; padding: 7px 12px; display: flex;
  background:
    repeating-linear-gradient(90deg, var(--dash)) 0 0 / 100% 1px no-repeat,
    repeating-linear-gradient(90deg, var(--dash)) 0 100% / 100% 1px no-repeat,
    repeating-linear-gradient(180deg, var(--dash)) 0 0 / 1px 100% no-repeat,
    repeating-linear-gradient(180deg, var(--dash)) 100% 0 / 1px 100% no-repeat;
}
.bullet { width: 16px; height: 16px; border-radius: 8px; background: #000; margin: 3px 3px 0 0; }
.vscroll { width: 6px; padding: 187px 0 197px; display: flex; }
.vscroll i { flex: 1; border-radius: 3px; background: #888; }
.hscroll { height: 9px; flex: none; padding: 0 372px 3px 362px; display: flex; }
.hscroll i { flex: 1; border-radius: 3px; background: #888; }

/* properties sidebar */
.props { width: 456px; flex: none; padding: 3px 3px 0 2px; }
.props-head { height: 23px; display: flex; align-items: center; gap: 7px; padding: 0 6px 1px 0; }
.props-head button { margin-left: auto; }
.grip { width: 8px; height: 14px; }
.band { height: 18px; display: flex; align-items: center; gap: 3px; background: #ebebeb; padding: 0 2px; }
.band button { margin-left: auto; }
.chev { width: 12px; height: 12px; fill: none; stroke: #444; }
.gear { width: 12px; height: 12px; fill: none; stroke: #666; }
.fields { display: flex; gap: 14px; padding: 10px 0 0 10px; }
.combo { display: flex; height: 34px; border: 1px solid #c4c4c4; border-radius: 6px; background: #fff; position: relative; }
.combo > input { flex: 1; border: 0; background: none; padding: 0 8px; outline: 0; }
.combo > button { width: 35px; border-left: 1px solid #c4c4c4; }
.combo > .open { background: #d5d5d5; border-radius: 0 5px 5px 0; }
.name-combo { width: 317px; }
.size-combo { width: 101px; }
.popup {
  position: absolute; z-index: 2; left: -1px; top: 34px; width: 448px;
  display: flex; background: #fff; border: 1px solid #bcbcbc; box-shadow: 0 1px 2px #aaa;
}
.fonts { flex: 1; }
.fonts li {
  height: 29px; padding: 0 19px 2px 7px; white-space: nowrap;
  display: flex; align-items: center; justify-content: space-between;
}
.fonts span { font: 20px/28px "Noto Sans", "DejaVu Sans", sans-serif; }
.fonts .small { font-size: 18px; }
.fonts .f-sans { font: 20px/28px "Liberation Sans", Arial, sans-serif; }
.fonts .f-narrow { font: 17px/28px "Liberation Sans Narrow", "Liberation Sans", sans-serif; }
.fonts .f-serif { font: 20px/28px "Liberation Serif", serif; }
.fonts .f-likhan { font: 18px/28px "Liberation Serif", serif; }
.fonts .f-deva { font: 300 18px/28px "Open Sans", sans-serif; }
.fonts .f-libre { font: 400 20px/28px "Inter", sans-serif; }
.fonts .w200 { font-weight: 200; }
.fonts .w300 { font-weight: 300; }
.fonts .w500 { font-weight: 500; }
.fonts .w600 { font-weight: 600; }
.fonts .w800 { font-weight: 800; }
.fonts .w900 { font-weight: 900; }
.fonts .picked { background: #e95420; color: #fff; }
.pop-scroll { width: 14px; background: #fafafa; border-left: 1px solid #bcbcbc; padding: 175px 3px 0; }
.pop-scroll i { display: block; height: 40px; border-radius: 3px; background: #888; }
.pointer { position: absolute; left: 223px; top: 272px; width: 18px; height: 26px; }
.second { margin-top: 101px; }
.third { margin-top: 55px; }
.spacing { padding: 57px 0 0 6px; }

.tabs { width: 47px; flex: none; display: flex; flex-direction: column; align-items: flex-start; gap: 8px; padding: 2px 0 0 1px; }
.tabs button { width: 36px; height: 34px; border-radius: 6px; border: 1px solid transparent; }
.tabs .menu { margin-bottom: 3px; }
.tabs .on { background: #d5d5d5; border-color: #c3c3c3; }

/* status bar */
.status {
  height: 21px; flex: none; display: flex; border-top: 1px solid #b5b5b5;
  font-size: 12px; line-height: 18px;
}
.status > span { display: flex; align-items: center; padding: 2px 0 0 10px; border-right: 1px solid #dcdcdc; white-space: nowrap; overflow: hidden; }
.status b { font-weight: 400; }
.status svg { width: 16px; height: 14px; fill: none; stroke: #4a4a4a; }
.status .fit { stroke: #e95420; stroke-width: 1.500; }
.status > .c-slide { width: 76px; padding-left: 9px; }
.status > .c-edit { flex: 542 1 0; padding-left: 8px; }
.c-layout { flex: 354 1 0; }
.c-pos { width: 216px; gap: 4px; }
.c-pos b { flex: 1; }
.c-save, .c-fit { width: 23px; }
.status > .c-save, .status > .c-fit { padding-left: 5px; }
.c-sign { width: 28px; }
.c-lang { flex: 397 1 0; justify-content: center; }
.c-zoom { width: 143px; gap: 6px; }
.c-zoom svg { width: 9px; height: 9px; stroke-width: 2; }
.c-zoom input { flex: 1; height: 14px; margin: 0; appearance: none; background: none; }
.c-zoom input::-webkit-slider-runnable-track { height: 2px; background: #999; }
.c-zoom input::-webkit-slider-thumb {
  appearance: none; width: 8px; height: 8px; margin-top: -3px;
  border: 1px solid #444; border-radius: 4px; background: #fff;
}
.status > .c-zoom { padding: 2px 6px 0 10px; }
.status > .c-pct { width: 49px; border-right: 0; padding-left: 8px; }
```
